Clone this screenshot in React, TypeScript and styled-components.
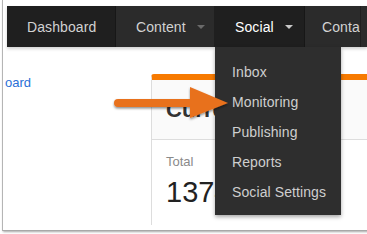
import React from "react";
import styled, { createGlobalStyle } from "styled-components";

const Global = createGlobalStyle`
  html, body { margin: 0; padding: 0; background: #ffffff; }
  body { font-family: "Liberation Sans", Arial, sans-serif; width: 367px; height: 234px; overflow: hidden; }
`;

const Frame = styled.div`
  position: relative;
  margin-left: 2px;
  width: 360px;
  height: 224px;
  border-left: 1px solid #b5b5b5;
  border-right: 1px solid #b5b5b5;
  border-bottom: 1px solid #a8a8a8;
  box-shadow: 1px 1px 2px rgba(0, 0, 0, 0.35);
  background: #ffffff;
  padding: 6px 2px 0 4px;
  box-sizing: content-box;
  overflow: hidden;
`;

const Nav = styled.div`
  display: flex;
  height: 41px;
  background: #2b2b2b;
  box-shadow: 0 2px 3px rgba(0, 0, 0, 0.18);
  position: relative;
  z-index: 2;
`;

const NavItem = styled.div<{ $w: number; $dark?: boolean; $active?: boolean }>`
  position: relative;
  display: flex;
  align-items: center;
  gap: 11px;
  width: ${(p) => p.$w}px;
  flex: none;
  box-sizing: border-box;
  padding-left: 20px;
  background: ${(p) => (p.$dark ? "#1f1f1f" : "#2b2b2b")};
  border-right: 1px solid ${(p) => (p.$dark ? "#171717" : "#1f1f1f")};
  color: ${(p) => (p.$active ? "#ffffff" : "#d2d2d2")};
  font-size: 14px;
  letter-spacing: 0.1px;
  white-space: nowrap;
`;

const Caret = styled.span<{ $light?: boolean }>`
  width: 0;
  height: 0;
  border-left: 4px solid transparent;
  border-right: 4px solid transparent;
  border-top: 4px solid ${(p) => (p.$light ? "#c8c8c8" : "#6a6a6a")};
  margin-top: 1px;
`;

const Dropdown = styled.div`
  position: absolute;
  left: 0;
  top: 41px;
  width: 126px;
  padding: 10px 0 8px;
  background: #2e2e2e;
  box-shadow: 0 2px 4px rgba(0, 0, 0, 0.35);
  display: flex;
  flex-direction: column;
  z-index: 3;
`;

const MenuItem = styled.div`
  height: 30px;
  display: flex;
  align-items: center;
  padding-left: 17px;
  color: #cfcfcf;
  font-size: 14px;
  white-space: nowrap;
`;

const Body = styled.div`
  display: flex;
  padding-top: 27px;
`;

const Crumb = styled.a`
  width: 146px;
  flex: none;
  color: #2a6fd6;
  font-size: 13px;
  margin-top: 1px;
  text-decoration: none;
  align-self: flex-start;
  line-height: 16px;
  margin-left: -2px;
`;

const Card = styled.div`
  flex: 1;
  height: 145px;
  border-top: 6px solid #f77a00;
  border-left: 1px solid #dddddd;
  border-radius: 3px 0 0 0;
  background: #ffffff;
`;

const CardHead = styled.div`
  height: 59px;
  border-bottom: 1px solid #dddddd;
  background: #fafafa;
  padding-left: 14px;
  display: flex;
  align-items: center;
  font-size: 22px;
  font-weight: bold;
  color: #333333;
`;

const Stat = styled.div`
  padding: 14px 0 0 14px;
  display: flex;
  flex-direction: column;
`;

const StatLabel = styled.div`
  font-size: 13px;
  color: #8a8a8a;
`;

const StatValue = styled.div`
  font-size: 29px;
  color: #222222;
  margin-top: 7px;
`;

const Arrow = styled.svg`
  position: absolute;
  left: 0;
  top: 0;
  z-index: 5;
  overflow: visible;
`;

export default function App() {
  return (
    <>
      <Global />
      <Frame>
        <Nav>
          <NavItem $w={109} $dark>Dashboard</NavItem>
          <NavItem $w={99}>
            Content <Caret />
          </NavItem>
          <NavItem $w={90} $dark $active>
            Social <Caret $light />
            <Dropdown>
              <MenuItem>Inbox</MenuItem>
              <MenuItem>Monitoring</MenuItem>
              <MenuItem>Publishing</MenuItem>
              <MenuItem>Reports</MenuItem>
              <MenuItem>Social Settings</MenuItem>
            </Dropdown>
          </NavItem>
          <NavItem $w={56} style={{ paddingLeft: 17, overflow: "hidden" }}>Contacts</NavItem>
        </Nav>
        <Body>
          <Crumb>oard</Crumb>
          <Card>
            <CardHead>Current</CardHead>
            <Stat>
              <StatLabel>Total</StatLabel>
              <StatValue>1374</StatValue>
            </Stat>
          </Card>
        </Body>
        <Arrow width="367" height="234" viewBox="0 0 367 234">
          <defs>
            <filter id="sh" x="-20%" y="-50%" width="140%" height="200%">
              <feDropShadow dx="0" dy="1.5" stdDeviation="1.2" floodColor="#000" floodOpacity="0.45" />
            </filter>
          </defs>
          <g filter="url(#sh)" transform="translate(-3 0)">
            <rect x="114" y="99" width="80" height="8" rx="4" fill="#e8711d" />
            <polygon points="190,87 228,103 190,118" fill="#e8711d" />
          </g>
        </Arrow>
      </Frame>
    </>
  );
}
